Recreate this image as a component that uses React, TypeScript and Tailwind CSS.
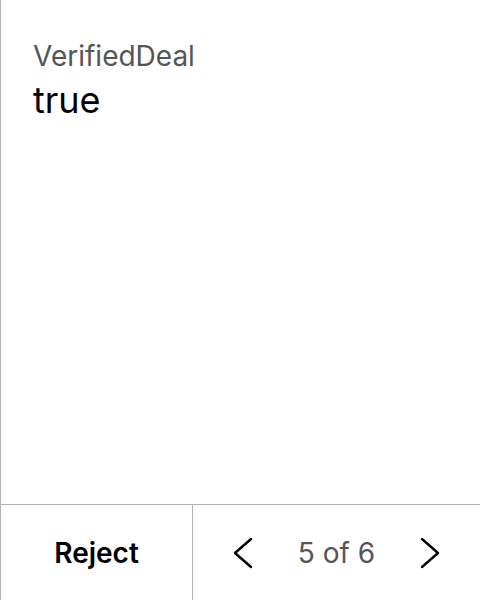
function Chevron({ dir }: { dir: "left" | "right" }) {
  return (
    <svg width="20" height="32" viewBox="0 0 20 32" fill="none" className="text-black">
      <polyline
        points={dir === "left" ? "18,2 2,16 18,30" : "2,2 18,16 2,30"}
        stroke="currentColor"
        strokeWidth="2.4"
        strokeLinecap="round"
        strokeLinejoin="round"
      />
    </svg>
  );
}

export default function App() {
  return (
    <div className="flex h-[600px] w-[480px] flex-col border-l border-[#b3b3b3] bg-white font-['Inter',sans-serif]">
      {/* Field */}
      <div className="flex-1 px-8 pt-[39px]">
        <div className="text-[28px] leading-[34px] text-[#555555]">VerifiedDeal</div>
        <div className="mt-[5px] text-[36px] leading-[44px] text-black">true</div>
      </div>

      {/* Footer actions */}
      <div className="flex h-24 border-t border-[#b3b3b3]">
        <button className="flex w-[192px] items-center justify-center border-r border-[#b3b3b3] text-[28px] font-semibold text-black">
          Reject
        </button>
        <div className="flex flex-1 items-center justify-between px-[40px]">
          <Chevron dir="left" />
          <span className="text-[28px] text-[#555555]">5 of 6</span>
          <Chevron dir="right" />
        </div>
      </div>
    </div>
  );
}
